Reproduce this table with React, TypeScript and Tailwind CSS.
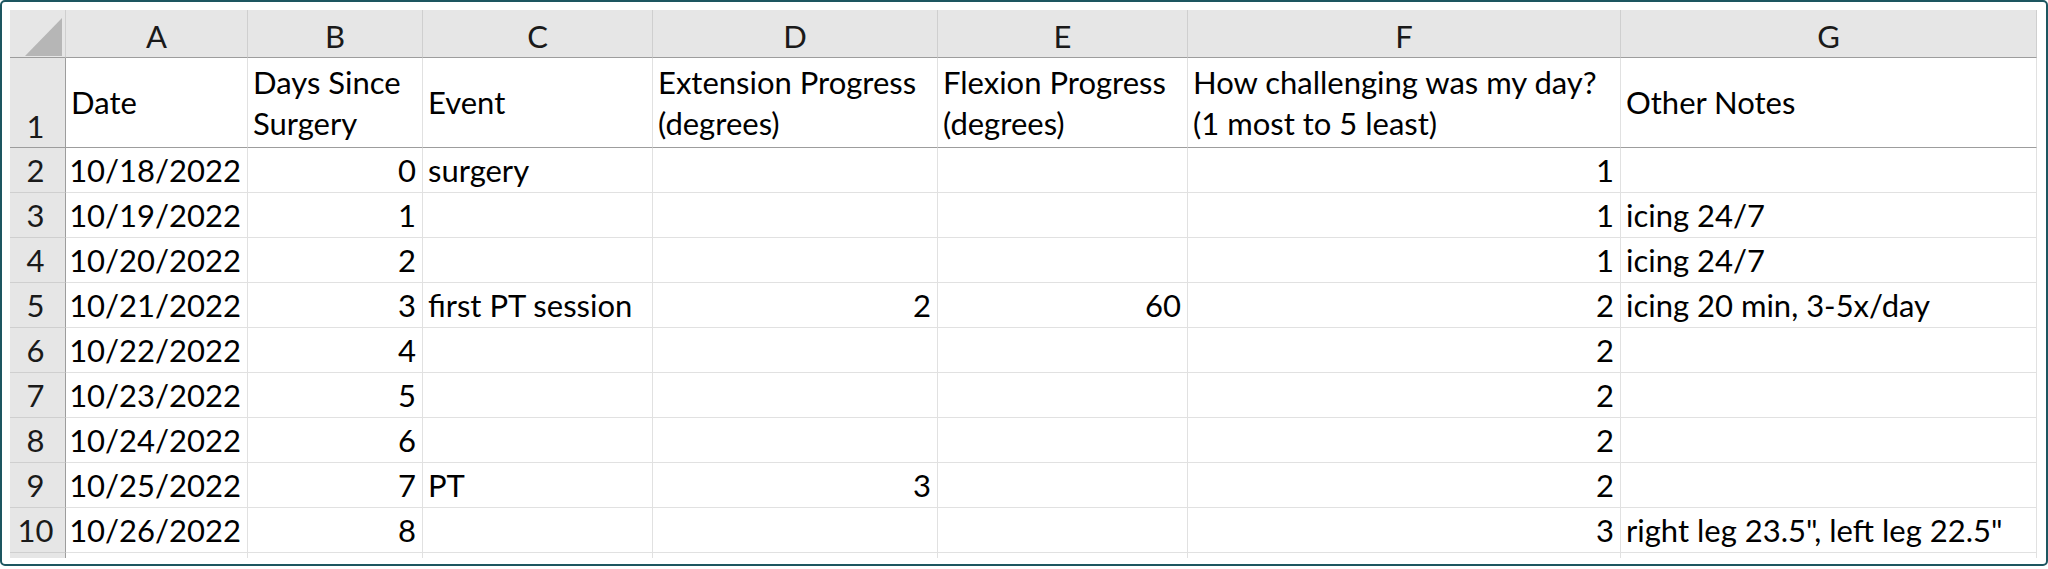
import React from "react";

const cols = ["A", "B", "C", "D", "E", "F", "G"];

type Row = [string, string, string, string, string, string, string];

const rows: Row[] = [
  ["10/18/2022", "0", "surgery", "", "", "1", ""],
  ["10/19/2022", "1", "", "", "", "1", "icing 24/7"],
  ["10/20/2022", "2", "", "", "", "1", "icing 24/7"],
  ["10/21/2022", "3", "first PT session", "2", "60", "2", "icing 20 min, 3-5x/day"],
  ["10/22/2022", "4", "", "", "", "2", ""],
  ["10/23/2022", "5", "", "", "", "2", ""],
  ["10/24/2022", "6", "", "", "", "2", ""],
  ["10/25/2022", "7", "PT", "3", "", "2", ""],
  ["10/26/2022", "8", "", "", "", "3", 'right leg 23.5", left leg 22.5"'],
  ["", "", "", "", "", "", ""],
];

// which columns are right aligned (numbers / dates)
const rightAligned = [true, true, false, true, true, true, false];

const headers: string[][] = [
  ["Date"],
  ["Days Since", "Surgery"],
  ["Event"],
  ["Extension Progress", "(degrees)"],
  ["Flexion Progress", "(degrees)"],
  ["How challenging was my day?", "(1 most to 5 least)"],
  ["Other Notes"],
];

export default function App() {
  return (
    <div
      className="w-[2048px] h-[569px] bg-white overflow-hidden"
      style={{ fontFamily: "Lato, 'Open Sans', sans-serif" }}
    >
      <div className="h-[566px] w-[2048px] border-2 border-[#1d5660] rounded-[5px] pt-[8px] pl-[8px] overflow-hidden">
        <div className="grid grid-cols-[56px_182px_175px_230px_285px_250px_433px_416px] grid-rows-[48px_90px_45px_45px_45px_45px_45px_45px_45px_45px_45px_45px] h-[548px] overflow-hidden text-[31px] text-black">
          {/* corner */}
          <div className="bg-[#e6e6e6] border-r border-r-[#cfcfcf] border-b border-b-[#9d9d9d] relative">
            <svg className="absolute left-[15px] top-[8px]" width="38" height="38" viewBox="0 0 38 38">
              <polygon points="0,38 37,0 37,38" fill="#b6b6b6" />
            </svg>
          </div>
          {cols.map((c) => (
            <div
              key={c}
              className="bg-[#e6e6e6] border-r border-r-[#cfcfcf] border-b border-b-[#9d9d9d] flex items-end justify-center leading-[37px] pb-[2px] text-[#1a1a1a]"
            >
              {c}
            </div>
          ))}

          {/* header row 1 */}
          <div className="bg-[#e6e6e6] border-r border-r-[#9d9d9d] border-b border-b-[#9d9d9d] flex items-end justify-center pr-[4px] leading-[37px] pb-[2px] text-[#1a1a1a]">
            1
          </div>
          {headers.map((h, i) => (
            <div
              key={i}
              className="border-r border-r-[#e1e1e1] border-b border-b-[#9d9d9d] flex flex-col justify-center pl-[5px] leading-[41px] whitespace-nowrap overflow-hidden"
            >
              {h.map((line, j) => (
                <span key={j}>{line}</span>
              ))}
            </div>
          ))}

          {rows.map((r, ri) => (
            <React.Fragment key={ri}>
              <div className="bg-[#e6e6e6] border-r border-r-[#9d9d9d] border-b border-b-[#cfcfcf] flex items-end justify-center pr-[4px] leading-[37px] pb-[3px] text-[#1a1a1a]">
                {ri < 9 ? ri + 2 : ""}
              </div>
              {r.map((v, ci) => (
                <div
                  key={ci}
                  className={
                    rightAligned[ci]
                      ? "border-r border-r-[#e1e1e1] border-b border-b-[#e1e1e1] flex items-end justify-end pr-[6px] leading-[37px] pb-[3px] whitespace-nowrap"
                      : "border-r border-r-[#e1e1e1] border-b border-b-[#e1e1e1] flex items-end justify-start pl-[5px] leading-[37px] pb-[3px] whitespace-nowrap"
                  }
                >
                  {v}
                </div>
              ))}
            </React.Fragment>
          ))}
        </div>
      </div>
    </div>
  );
}
